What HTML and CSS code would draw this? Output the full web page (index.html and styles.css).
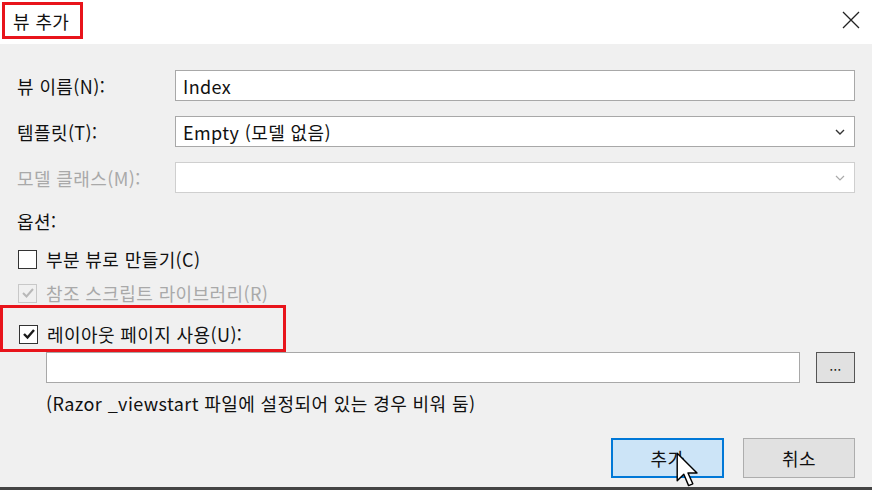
FILE: index.html
```html
<!DOCTYPE html>
<html lang="ko">
<head>
<meta charset="utf-8">
<link rel="stylesheet" href="styles.css">
</head>
<body>
<div class="dialog">
  <div class="titlebar">
    <span class="title">뷰 추가</span>
    <svg class="close" width="18" height="18" viewBox="0 0 18 18"><path d="M1 1L17 17M17 1L1 17" stroke="#222" stroke-width="1.3" fill="none"/></svg>
  </div>
  <div class="body">
    <div class="row">
      <span class="label">뷰 이름(N):</span>
      <div class="field">Index</div>
    </div>
    <div class="row">
      <span class="label">템플릿(T):</span>
      <div class="field select">Empty (모델 없음)<svg class="chev" width="10" height="6" viewBox="0 0 10 6"><path d="M1 1L5 5L9 1" stroke="#333" stroke-width="1.4" fill="none"/></svg></div>
    </div>
    <div class="row">
      <span class="label disabled">모델 클래스(M):</span>
      <div class="field select dis"><svg class="chev" width="10" height="6" viewBox="0 0 10 6"><path d="M1 1L5 5L9 1" stroke="#aaa" stroke-width="1.2" fill="none"/></svg></div>
    </div>
    <div class="options">옵션:</div>
    <div class="check first"><span class="box"></span><span>부분 뷰로 만들기(C)</span></div>
    <div class="check disabled"><span class="box dbox"><svg width="14" height="12" viewBox="0 0 14 12"><path d="M2 6L5.5 9.5L12 2" stroke="#b8b8b8" stroke-width="2" fill="none"/></svg></span><span>참조 스크립트 라이브러리(R)</span></div>
    <div class="highlight">
      <div class="check"><span class="box"><svg width="14" height="12" viewBox="0 0 14 12"><path d="M2 6L5.5 9.5L12 2" stroke="#1a1a1a" stroke-width="2.4" fill="none"/></svg></span><span>레이아웃 페이지 사용(U):</span></div>
    </div>
    <div class="layout-row">
      <div class="field wide"></div>
      <div class="browse">...</div>
    </div>
    <div class="hint">(Razor _viewstart 파일에 설정되어 있는 경우 비워 둠)</div>
    <div class="buttons">
      <div class="btn primary">추가
        <svg class="cursor" width="24" height="36" viewBox="0 0 20 30"><path d="M1 1L1 24L6.5 18.5L10.5 28L14 26.5L10 17.5L17.5 17.5Z" fill="#fff" stroke="#000" stroke-width="1.2" stroke-linejoin="round"/></svg>
      </div>
      <div class="btn">취소</div>
    </div>
  </div>
</div>
</body>
</html>
```
FILE: styles.css
```css
* { box-sizing: border-box; }
html, body { margin: 0; padding: 0; }
body {
  width: 872px;
  height: 490px;
  overflow: hidden;
  font-family: "Noto Sans CJK KR", "Noto Sans", sans-serif;
  font-size: 18px;
  letter-spacing: 0.4px;
  color: #111;
  background: #f0f0f0;
}
.dialog {
  width: 872px;
  height: 490px;
  display: flex;
  flex-direction: column;
  border-bottom: 3px solid #444;
}
.titlebar {
  flex: none;
  height: 44px;
  background: #fff;
  display: flex;
  align-items: flex-start;
  justify-content: space-between;
  padding: 2px 12px 0 2px;
}
.title {
  display: inline-flex;
  align-items: center;
  height: 37px;
  width: 81px;
  padding-left: 8px;
  border: 3px solid #e8141b;
  font-size: 18px;
  line-height: 1;
}
.close { margin-top: 9px; }
.body {
  flex: 1;
  padding: 26px 17px 0 17px;
  display: flex;
  flex-direction: column;
}
.row {
  display: flex;
  align-items: center;
  height: 31px;
  margin-bottom: 15px;
  flex: none;
}
.label { width: 158px; flex: none; }
.disabled { color: #a9a9a9; }
.field {
  flex: 1;
  height: 31px;
  background: #fff;
  border: 1px solid #a8a8a8;
  display: flex;
  align-items: center;
  padding-left: 7px;
  position: relative;
}
.select .chev { position: absolute; right: 9px; top: 12px; }
.field.dis { border-color: #cfcfcf; }
.options { height: 27px; line-height: 27px; margin-bottom: 14px; flex: none; }
.check {
  display: flex;
  align-items: center;
  gap: 9px;
  height: 20px;
  flex: none;
}
.check.first { margin-bottom: 14px; margin-left: 1px; }
.check.disabled { margin-left: 1px; }
.box {
  width: 19px;
  height: 19px;
  flex: none;
  border: 1px solid #333;
  background: #fff;
  display: flex;
  align-items: center;
  justify-content: center;
}
.dbox { border-color: #c8c8c8; background: #f0f0f0; }
.highlight {
  flex: none;
  margin: 2px 0 0 -17px;
  width: 286px;
  height: 47px;
  border: 3px solid #e8141b;
  padding: 16px 0 0 16px;
  display: flex;
  align-items: flex-start;
}
.layout-row {
  flex: none;
  display: flex;
  gap: 16px;
  height: 31px;
  margin-left: 29px;
}
.field.wide { flex: none; width: 754px; padding: 0; }
.browse {
  width: 39px;
  height: 31px;
  background: #e1e1e1;
  border: 1px solid #555;
  display: flex;
  align-items: center;
  justify-content: center;
  font-size: 13px;
  padding-bottom: 4px;
}
.hint { flex: none; margin: 8px 0 0 29px; height: 24px; line-height: 24px; }
.buttons {
  flex: none;
  display: flex;
  justify-content: flex-end;
  gap: 19px;
  margin-top: 23px;
}
.btn {
  width: 112px;
  height: 40px;
  background: #e1e1e1;
  border: 1px solid #adadad;
  display: flex;
  align-items: center;
  justify-content: center;
  position: relative;
}
.btn.primary { background: #cce4f7; border: 2px solid #0078d7; width: 113px; }
.cursor { position: absolute; left: 63px; top: 12px; }
```
